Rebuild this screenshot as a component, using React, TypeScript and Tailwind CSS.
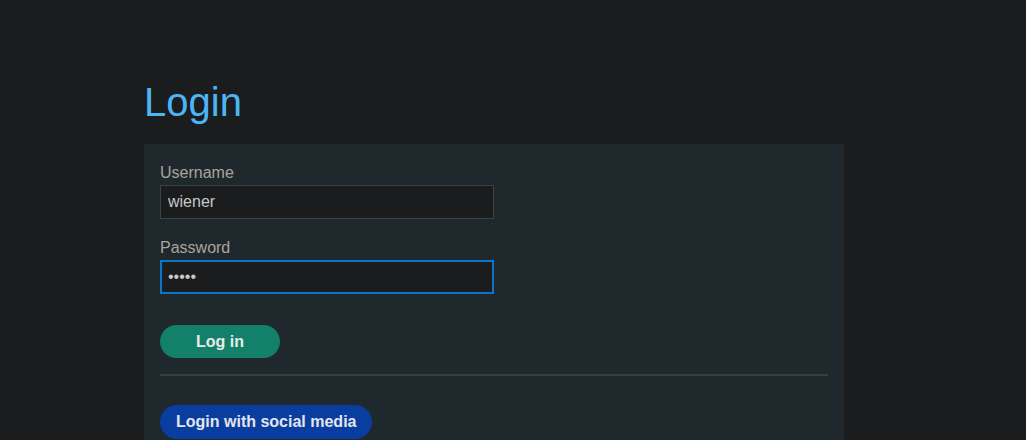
export default function App() {
  return (
    <div className="min-h-[440px] bg-[#1b1c1e] font-['Liberation_Sans',Arial,sans-serif]">
      <div className="ml-[144px] w-[700px] pt-[78px]">
        <h1 className="text-[40px] leading-[48px] text-[#4cb5f5]">Login</h1>
        <div className="mt-[18px] bg-[#1f282d] px-4 pt-[18px] pb-6">
          <label className="block text-base leading-[22px] text-[#a9a59c]">Username</label>
          <input
            readOnly
            value="wiener"
            className="mt-px block h-[34px] w-[334px] border border-[#3d4244] bg-[#1b1c1e] px-[7px] text-base text-[#c8c8c8] outline-none"
          />
          <label className="mt-[18px] block text-base leading-[22px] text-[#a9a59c]">Password</label>
          <input
            readOnly
            type="password"
            value="peter"
            className="mt-px block h-[34px] w-[334px] border-2 border-[#0b76c9] bg-[#1b1c1e] px-[6px] text-base text-[#c8c8c8] outline-none"
          />
          <button className="mt-[31px] block h-[33px] w-[120px] rounded-full bg-[#13806a] text-base font-bold text-[#e8ece9]">
            Log in
          </button>
          <hr className="mt-4 border-0 border-t-2 border-[#353d3d]" />
          <button className="mt-[29px] block h-[34px] rounded-full bg-[#0a3da0] px-4 text-base font-bold text-[#e3e6ee]">
            Login with social media
          </button>
        </div>
      </div>
    </div>
  );
}
